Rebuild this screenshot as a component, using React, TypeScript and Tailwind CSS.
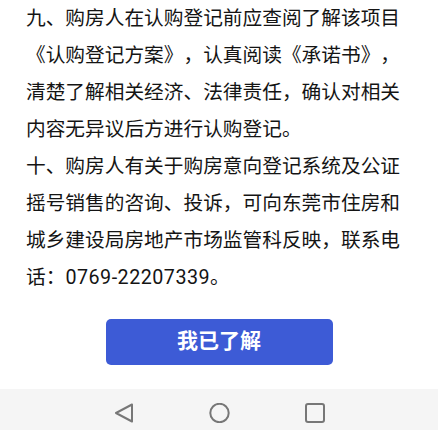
import React from "react";

const lines = [
  "九、购房人在认购登记前应查阅了解该项目",
  "《认购登记方案》，认真阅读《承诺书》，",
  "清楚了解相关经济、法律责任，确认对相关",
  "内容无异议后方进行认购登记。",
  "十、购房人有关于购房意向登记系统及公证",
  "摇号销售的咨询、投诉，可向东莞市住房和",
  "城乡建设局房地产市场监管科反映，联系电",
];

export default function App() {
  return (
    <div
      className="w-full h-[430px] flex flex-col bg-white overflow-hidden"
      style={{ fontFamily: 'Roboto, "Noto Sans CJK SC", sans-serif' }}
    >
      <div className="px-[26px] text-[19.7px] leading-[37px] text-[#141414] whitespace-nowrap [text-spacing-trim:space-all]">
        {lines.map((l, i) => (
          <div key={i}>{l}</div>
        ))}
        <div>
          话：<span className="tracking-[0.5px]">0769-22207339</span>。
        </div>
      </div>
      <div className="flex justify-center mt-[23px]">
        <button className="w-[227px] h-[46px] rounded-[5px] bg-[#3d5bd6] text-white text-[21px] font-bold flex items-center justify-center">
          我已了解
        </button>
      </div>
      <div className="flex-1" />
      <div className="h-[41px] bg-[#f5f5f5] flex justify-center items-start pt-[14px] gap-[75px]">
        <svg width="20" height="20" viewBox="0 0 20 20" fill="none">
          <path
            d="M18 1.5 L2 10 L18 18.5 Z"
            stroke="#777777"
            strokeWidth="2"
            strokeLinejoin="round"
          />
        </svg>
        <svg width="21" height="20" viewBox="0 0 21 20" fill="none">
          <circle cx="10.5" cy="10" r="9.2" stroke="#777777" strokeWidth="2" />
        </svg>
        <svg width="20" height="20" viewBox="0 0 20 20" fill="none">
          <rect x="1" y="1" width="18" height="18" rx="2" stroke="#777777" strokeWidth="2" />
        </svg>
      </div>
    </div>
  );
}
